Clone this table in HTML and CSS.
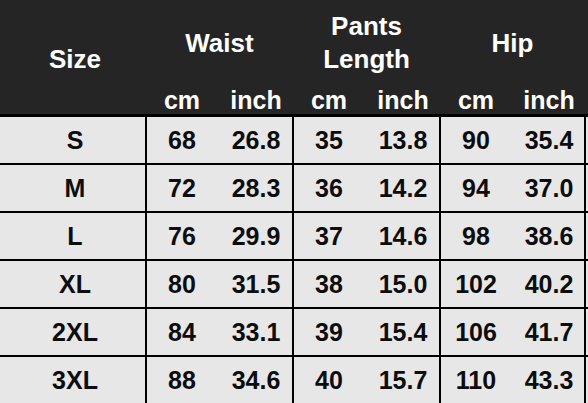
FILE: index.html
```html
<!DOCTYPE html>
<html>
<head>
<meta charset="utf-8">
<link rel="stylesheet" href="styles.css">
</head>
<body>
<div class="chart">
  <div class="head">
    <div class="hsize">Size</div>
    <div class="hgroup">
      <div class="htitle">Waist</div>
      <div class="hsub"><span class="cm">cm</span><span class="in">inch</span></div>
    </div>
    <div class="hgroup">
      <div class="htitle">Pants<br>Length</div>
      <div class="hsub"><span class="cm">cm</span><span class="in">inch</span></div>
    </div>
    <div class="hgroup last">
      <div class="htitle">Hip</div>
      <div class="hsub"><span class="cm">cm</span><span class="in">inch</span></div>
    </div>
  </div>
  <div class="body">
    <div class="row"><div class="size">S</div><div class="grp"><span class="cm">68</span><span class="in">26.8</span></div><div class="grp"><span class="cm">35</span><span class="in">13.8</span></div><div class="grp last"><span class="cm">90</span><span class="in">35.4</span></div></div>
    <div class="row"><div class="size">M</div><div class="grp"><span class="cm">72</span><span class="in">28.3</span></div><div class="grp"><span class="cm">36</span><span class="in">14.2</span></div><div class="grp last"><span class="cm">94</span><span class="in">37.0</span></div></div>
    <div class="row"><div class="size">L</div><div class="grp"><span class="cm">76</span><span class="in">29.9</span></div><div class="grp"><span class="cm">37</span><span class="in">14.6</span></div><div class="grp last"><span class="cm">98</span><span class="in">38.6</span></div></div>
    <div class="row"><div class="size">XL</div><div class="grp"><span class="cm">80</span><span class="in">31.5</span></div><div class="grp"><span class="cm">38</span><span class="in">15.0</span></div><div class="grp last"><span class="cm">102</span><span class="in">40.2</span></div></div>
    <div class="row"><div class="size">2XL</div><div class="grp"><span class="cm">84</span><span class="in">33.1</span></div><div class="grp"><span class="cm">39</span><span class="in">15.4</span></div><div class="grp last"><span class="cm">106</span><span class="in">41.7</span></div></div>
    <div class="row"><div class="size">3XL</div><div class="grp"><span class="cm">88</span><span class="in">34.6</span></div><div class="grp"><span class="cm">40</span><span class="in">15.7</span></div><div class="grp last"><span class="cm">110</span><span class="in">43.3</span></div></div>
  </div>
</div>
</body>
</html>
```
FILE: styles.css
```css
html, body {
  margin: 0;
  padding: 0;
  background: #e7e7e7;
  overflow: hidden;
}
.chart {
  width: 588px;
  height: 403px;
  font-family: "Liberation Sans", Arial, sans-serif;
  font-weight: bold;
  overflow: hidden;
}
.head {
  height: 114px;
  background: #252525;
  color: #ffffff;
  display: flex;
}
.hsize {
  width: 145px;
  padding-left: 5px;
  box-sizing: border-box;
  display: flex;
  align-items: center;
  justify-content: center;
  font-size: 26px;
  padding-top: 4px;
}
.hgroup {
  width: 145px;
  margin-left: 2px;
  display: flex;
  flex-direction: column;
}
.hgroup.last {
  width: 143px;
}
.htitle {
  height: 86px;
  display: flex;
  align-items: center;
  justify-content: center;
  text-align: center;
  font-size: 26px;
  line-height: 33px;
}
.hsub {
  height: 28px;
  display: flex;
  align-items: center;
  font-size: 25px;
}
.cm {
  width: 70px;
  text-align: center;
}
.in {
  flex: 1;
  padding-left: 3px;
  text-align: center;
}
.body {
  border-top: 3px solid #000;
}
.row {
  display: flex;
  height: 46px;
  border-bottom: 2px solid #000;
  color: #0d0d0d;
  font-size: 25px;
}
.size {
  width: 145px;
  padding-left: 5px;
  box-sizing: border-box;
  display: flex;
  align-items: center;
  justify-content: center;
}
.grp {
  width: 145px;
  border-left: 2px solid #000;
  display: flex;
  align-items: center;
}
.grp.last {
  width: 143px;
  border-right: 2px solid #000;
}
```
